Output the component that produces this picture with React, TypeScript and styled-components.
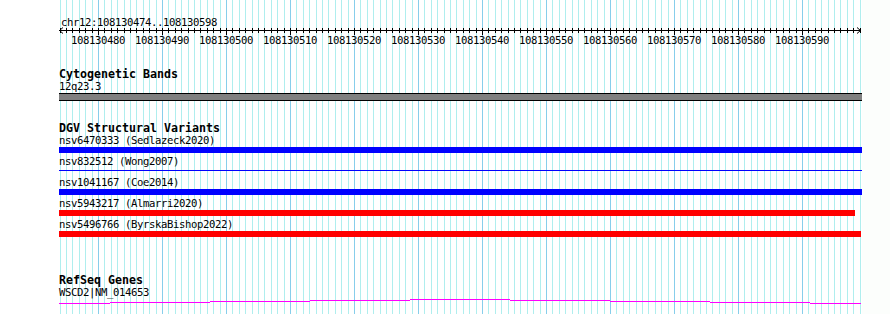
import React from "react";
import styled, { createGlobalStyle } from "styled-components";

const GlobalStyle = createGlobalStyle`
  html, body { margin: 0; padding: 0; background: #fcfefc; }
  body { width: 890px; height: 314px; overflow: hidden; }
`;

const START = 108130474;
const END = 108130598;
const ORIGIN = 60;
const SCALE = 6.4;
const PANEL_LEFT = 59;
const PANEL_WIDTH = 803;
const BASES = END - START + 1;

const px = (k: number) => Math.floor(ORIGIN + SCALE * k) + 0.5;
const isMajor = (k: number) => (START + k) % 10 === 0;

const Page = styled.div`
  position: relative;
  width: 890px;
  height: 314px;
  background: #fcfefc;
  overflow: hidden;
  font-family: "DejaVu Sans Mono", "Liberation Mono", monospace;
  color: #000;
`;

const Canvas = styled.div`
  position: relative;
  width: 862px;
  height: 314px;
  background: #ffffff;
`;

const GridLayer = styled.svg`
  position: absolute;
  left: 0;
  top: 0;
  pointer-events: none;
`;

const Column = styled.div`
  position: relative;
  display: flex;
  flex-direction: column;
  padding-left: ${PANEL_LEFT}px;
  width: ${PANEL_WIDTH}px;
`;

const RulerSection = styled.section`
  display: flex;
  flex-direction: column;
  padding-top: 16px;
`;

const SmallText = styled.div`
  font-size: 10.6px;
  letter-spacing: -0.38px;
  line-height: 12px;
  height: 12px;
  white-space: pre;
`;

const ChrLabel = styled(SmallText)`
  padding-left: 2px;
`;

const Axis = styled.svg`
  display: block;
  overflow: visible;
`;

const TickRow = styled.div`
  display: flex;
  padding-left: 7px;
`;

const TickLabel = styled(SmallText)`
  width: 64px;
  flex: 0 0 64px;
  text-align: center;
`;

const Track = styled.section<{ $gap: number }>`
  display: flex;
  flex-direction: column;
  margin-top: ${(p) => p.$gap}px;
`;

const TrackTitle = styled.div`
  font-size: 11.63px;
  font-weight: bold;
  line-height: 12px;
  height: 12px;
  white-space: pre;
`;

const BandBar = styled.div`
  margin-top: 1px;
  height: 6px;
  width: ${PANEL_WIDTH}px;
  background: #808080;
  border-top: 1px solid #000;
  border-bottom: 1px solid #000;
`;

const FeatureRow = styled.div`
  display: flex;
  flex-direction: column;
  height: 21px;
`;

const FeatureBar = styled.div<{ $color: string; $thin?: boolean }>`
  background: ${(p) => p.$color};
  height: ${(p) => (p.$thin ? 1 : 6)}px;
  margin-top: ${(p) => (p.$thin ? 3 : 1)}px;
`;

const GeneTrace = styled.svg`
  display: block;
`;

const variants = [
  { label: "nsv6470333 (Sedlazeck2020)", color: "#0000ff", width: 803 },
  { label: "nsv832512 (Wong2007)", color: "#0000ff", width: 803, thin: true },
  { label: "nsv1041167 (Coe2014)", color: "#0000ff", width: 803 },
  { label: "nsv5943217 (Almarri2020)", color: "#ff0000", width: 796 },
  { label: "nsv5496766 (ByrskaBishop2022)", color: "#ff0000", width: 802 },
];

const geneSegments: [number, number, number][] = [
  [59, 110, 303],
  [110, 210, 302],
  [210, 310, 301],
  [310, 410, 300],
  [410, 510, 299],
  [510, 610, 300],
  [610, 710, 301],
  [710, 810, 302],
  [810, 861, 303],
];

const ks = Array.from({ length: BASES + 1 }, (_, k) => k);
const majors = ks.filter((k) => k < BASES && isMajor(k));

export default function App() {
  return (
    <>
      <GlobalStyle />
      <Page>
        <Canvas>
          <GridLayer width={862} height={314}>
            {ks.map((k) => (
              <line
                key={k}
                x1={px(k)}
                x2={px(k)}
                y1={0}
                y2={314}
                stroke={isMajor(k) ? "#87ceeb" : "#afeeee"}
                strokeWidth={1}
              />
            ))}
          </GridLayer>
          <Column>
            <RulerSection>
              <ChrLabel>chr12:108130474..108130598</ChrLabel>
              <Axis width={PANEL_WIDTH} height={6}>
                <line x1={0} x2={802} y1={2.5} y2={2.5} stroke="#000" strokeWidth={1} />
                {ks.map((k) => {
                  const x = px(k) - PANEL_LEFT;
                  return (
                    <line
                      key={k}
                      x1={x}
                      x2={x}
                      y1={0}
                      y2={isMajor(k) ? 7 : 5}
                      stroke="#000"
                      strokeWidth={1}
                    />
                  );
                })}
                <polyline points="4,-0.5 0.5,2.5 4,5.5" fill="none" stroke="#000" strokeWidth={1} />
                <polyline points="798,-0.5 801.5,2.5 798,5.5" fill="none" stroke="#000" strokeWidth={1} />
              </Axis>
              <TickRow>
                {majors.map((k) => (
                  <TickLabel key={k}>{START + k}</TickLabel>
                ))}
              </TickRow>
            </RulerSection>

            <Track $gap={22}>
              <TrackTitle>Cytogenetic Bands</TrackTitle>
              <SmallText>12q23.3</SmallText>
              <BandBar />
            </Track>

            <Track $gap={21}>
              <TrackTitle>DGV Structural Variants</TrackTitle>
              {variants.map((v) => (
                <FeatureRow key={v.label}>
                  <SmallText>{v.label}</SmallText>
                  <FeatureBar $color={v.color} $thin={v.thin} style={{ width: v.width }} />
                </FeatureRow>
              ))}
            </Track>

            <Track $gap={35}>
              <TrackTitle>RefSeq Genes</TrackTitle>
              <SmallText>WSCD2|NM_014653</SmallText>
              <GeneTrace width={PANEL_WIDTH} height={8}>
                {geneSegments.map(([x1, x2, y]) => (
                  <rect
                    key={x1}
                    x={x1 - PANEL_LEFT}
                    y={y - 298}
                    width={x2 - x1}
                    height={1}
                    fill="#ff00ff"
                  />
                ))}
              </GeneTrace>
            </Track>
          </Column>
        </Canvas>
      </Page>
    </>
  );
}
